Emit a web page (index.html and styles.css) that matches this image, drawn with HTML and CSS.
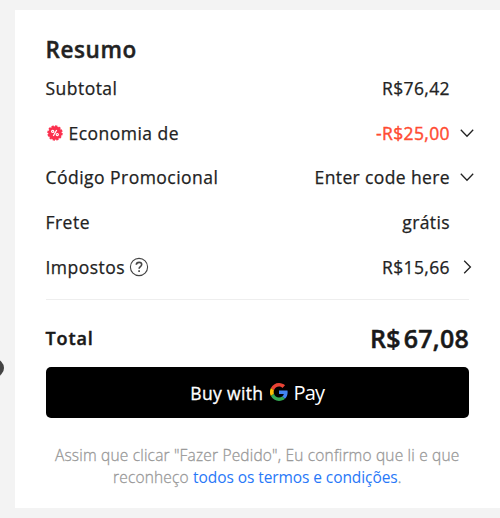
FILE: index.html
```html
<!DOCTYPE html>
<html lang="pt-BR">
<head>
<meta charset="utf-8">
<title>Resumo</title>
<link rel="stylesheet" href="styles.css">
</head>
<body>
<span class="edge-knob"></span>
<main class="card">
  <h1 class="title"><span>Resumo</span></h1>
  <div class="row"><span class="label">Subtotal</span><span class="value">R$76,42</span></div>
  <div class="row">
    <span class="label"><svg class="badge" viewBox="0 0 16 16"><circle cx="8" cy="8" r="6.8" fill="#fb304e"/><circle cx="8" cy="8" r="6.9" fill="none" stroke="#fb304e" stroke-width="1.6" stroke-dasharray="2.3 1.3"/><g fill="none" stroke="#fff" stroke-width="1.2"><circle cx="5.7" cy="6.4" r="1.1"/><circle cx="10.3" cy="9.6" r="1.1"/><path d="M9.7 5 6.3 11"/></g></svg><span class="savings">Economia de</span></span>
    <span class="value discount">-R$25,00</span>
    <svg class="arrow" viewBox="0 0 14 14"><path d="M.8 3.7 7 10.2l6.2-6.5"/></svg>
  </div>
  <div class="row">
    <span class="label">Código Promocional</span><span class="value">Enter code here</span>
    <svg class="arrow" viewBox="0 0 14 14"><path d="M.8 3.7 7 10.2l6.2-6.5"/></svg>
  </div>
  <div class="row"><span class="label">Frete</span><span class="value">grátis</span></div>
  <div class="row">
    <span class="label">Impostos<svg class="help" viewBox="0 0 20 20"><circle cx="10" cy="10" r="8.6"/><path d="M7.3 7.8c.1-1.6 1.2-2.4 2.8-2.4 1.5 0 2.6.8 2.6 2.2 0 2-2.6 2-2.6 4.2M10.1 13.2v1.8"/></svg></span>
    <span class="value">R$15,66</span>
    <svg class="arrow" viewBox="0 0 14 14"><path d="m4.2.8 6.2 6.2-6.2 6.2"/></svg>
  </div>
  <div class="total"><span class="total-label">Total</span><span class="total-value">R$<span class="amount">67,08</span></span></div>
  <button class="pay" type="button">
    <span class="buy">Buy with</span>
    <svg class="google" viewBox="0 0 48 48"><path fill="#ea4335" d="M24 9.5c3.5 0 6.7 1.2 9.2 3.6l6.9-6.9C35.9 2.4 30.5 0 24 0 14.6 0 6.5 5.4 2.6 13.2l8 6.2C12.5 13.7 17.7 9.5 24 9.5z"/><path fill="#4285f4" d="M47 24.6c0-1.6-.2-3.1-.4-4.6H24v9h12.900c-.6 3-2.200 5.500-4.700 7.200l7.700 6C44.400 38 47 31.800 47 24.600z"/><path fill="#fbbc05" d="M10.500 28.600A14.500 14.500 0 0 1 10.500 19.400l-8-6.200a24 24 0 0 0 0 21.600z"/><path fill="#34a853" d="M24 48c6.500 0 11.900-2.100 15.900-5.800l-7.700-6c-2.200 1.500-4.900 2.300-8.200 2.300-6.300 0-11.600-4.200-13.500-9.900l-8 6.200C6.500 42.600 14.600 48 24 48z"/></svg>
    <span class="pay-word">Pay</span>
  </button>
  <p class="terms"><span class="line-one">Assim que clicar "Fazer Pedido", Eu confirmo que li e que</span><br><span class="line-two">reconheço <a class="link">todos os termos e condições</a>.</span></p>
</main>
</body>
</html>
```
FILE: styles.css
```css
* { box-sizing: border-box; }
body {
  margin: 0;
  height: 518px;
  padding: 10px 0 10px 15px;
  background: #f3f3f3;
  color: #222;
  font-family: "Open Sans", "Noto Sans", sans-serif;
  overflow: hidden;
}
.edge-knob {
  position: absolute;
  left: -14px;
  top: 359px;
  width: 18px;
  height: 18px;
  border-radius: 50%;
  background: #434343;
}
.card {
  height: 498px;
  padding: 23.5px 31px 0 30.5px;
  background: #fff;
}
.title {
  height: 32px;
  margin: 0;
  font-size: 22.5px;
  line-height: 32px;
  font-weight: 600;
  letter-spacing: .6px;
  -webkit-text-stroke: .4px;
}
.row {
  display: flex;
  align-items: center;
  height: 44.7px;
  font-size: 17.5px;
  letter-spacing: .47px;
  white-space: nowrap;
  -webkit-text-stroke: .25px;
}
.label { display: flex; align-items: center; flex: 1; }
.value { margin-right: 19px; letter-spacing: .38px; }
.discount { color: #ff4b32; -webkit-text-stroke: .4px; }
.arrow {
  width: 14px;
  height: 14px;
  margin: 0 -5px 0 -9px;
  fill: none;
  stroke: #222;
  stroke-width: 1.3;
}
.badge { width: 16px; height: 16px; margin: 0 6px 0 1px; }
.help {
  width: 20px;
  height: 20px;
  margin-left: 3.5px;
  fill: none;
  stroke: #444;
  stroke-width: 1.1;
}
.help path { stroke-width: 1.6; }
.total {
  display: flex;
  align-items: center;
  justify-content: space-between;
  height: 68.5px;
  margin-top: 10px;
  padding-top: 8px;
  border-top: 1px solid #eee;
  color: #191919;
  font-weight: 600;
}
.total-label { font-size: 18px; letter-spacing: .9px; -webkit-text-stroke: .45px; }
.total-value { font-size: 25px; letter-spacing: .25px; -webkit-text-stroke: .5px; }
.amount { margin-left: 3px; }
.pay {
  display: flex;
  align-items: center;
  justify-content: center;
  width: 100%;
  height: 51px;
  padding: 0;
  border: 0;
  border-radius: 5px;
  background: #000;
  color: #fff;
  font: 400 17.5px "Open Sans", sans-serif;
}
.buy { letter-spacing: .35px; -webkit-text-stroke: .3px; }
.google { width: 18px; height: 18px; margin: -2px 5px 0 7px; }
.pay-word { font-size: 20px; letter-spacing: -.8px; }
.terms {
  margin: 26px -10px 0;
  color: #999;
  font-size: 15.5px;
  line-height: 22px;
  font-weight: 300;
  letter-spacing: .18px;
  text-align: center;
  white-space: nowrap;
  -webkit-text-stroke: .3px;
}
.link { color: #2878f8; font-weight: 400; letter-spacing: -.08px; -webkit-text-stroke: 0; }
```
